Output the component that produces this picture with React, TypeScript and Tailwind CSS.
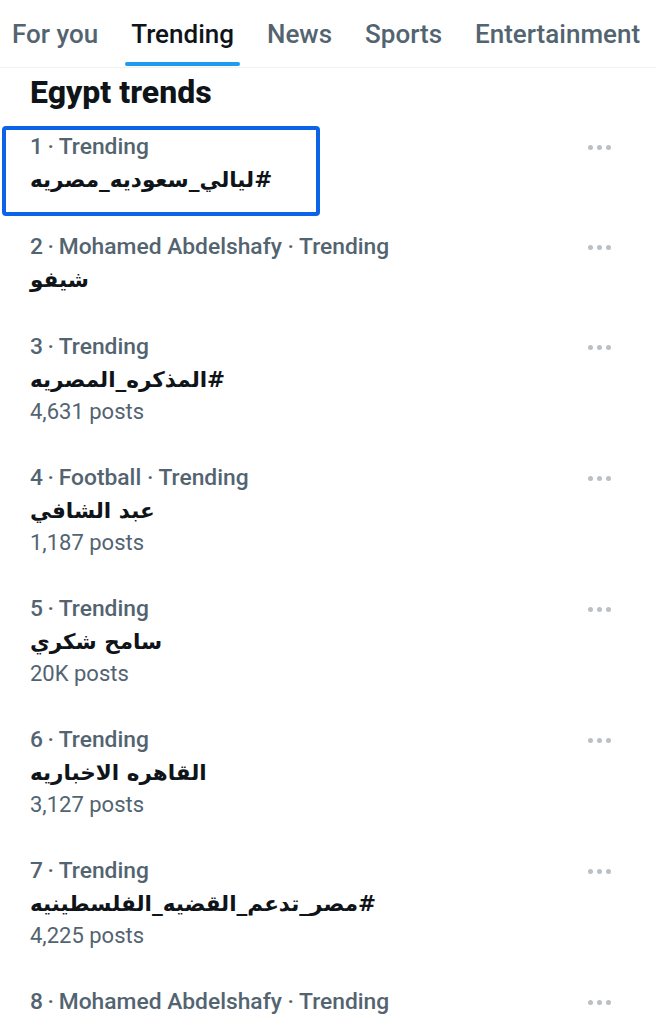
import { ReactNode } from 'react';

interface Trend {
    rank: number;
    context?: string;
    title?: string;
    posts?: string;
}

const trends: Trend[] = [
    { rank: 1, title: '#ليالي_سعوديه_مصريه' },
    { rank: 2, context: 'Mohamed Abdelshafy', title: 'شيفو' },
    { rank: 3, title: '#المذكره_المصريه', posts: '4,631 posts' },
    { rank: 4, context: 'Football', title: 'عبد الشافي', posts: '1,187 posts' },
    { rank: 5, title: 'سامح شكري', posts: '20K posts' },
    { rank: 6, title: 'القاهره الاخباريه', posts: '3,127 posts' },
    { rank: 7, title: '#مصر_تدعم_القضيه_الفلسطينيه', posts: '4,225 posts' },
    { rank: 8, context: 'Mohamed Abdelshafy' },
];

const tabs = ['For you', 'Trending', 'News', 'Sports', 'Entertainment'];

function Dots() {
    return (
        <div className="flex gap-[4px] pt-[14px]">
            <span className="w-[5px] h-[5px] rounded-full bg-[#b9c0c6]" />
            <span className="w-[5px] h-[5px] rounded-full bg-[#b9c0c6]" />
            <span className="w-[5px] h-[5px] rounded-full bg-[#b9c0c6]" />
        </div>
    );
}

function TrendRow({ trend, highlight }: { trend: Trend; highlight?: ReactNode }) {
    return (
        <div className="relative flex items-start justify-between pl-[30px] pr-[45px] pt-[17px] pb-[18px]">
            {highlight}
            <div className="flex flex-col">
                <div className="text-[22.8px] leading-[32px] font-medium text-[#536471]">
                    {trend.rank}
                    {'\u2009·\u2009'}
                    {trend.context ? `${trend.context} · ` : ''}Trending
                </div>
                {trend.title && (
                    <div
                        dir="rtl"
                        className="self-start text-[21.5px] leading-[33px] font-bold text-[#0f1419] font-['DejaVu_Sans',sans-serif]"
                    >
                        {trend.title}
                    </div>
                )}
                {trend.posts && (
                    <div className="text-[22px] leading-[31px] text-[#536471]">{trend.posts}</div>
                )}
            </div>
            <Dots />
        </div>
    );
}

export default function App() {
    return (
        <div className="w-[656px] h-[1020px] overflow-hidden bg-white font-['Roboto',sans-serif]">
            <div className="flex items-end h-[68px] border-b border-[#eff3f4] pl-[12px] gap-[33px]">
                {tabs.map((t) => (
                    <div key={t} className="relative h-full flex flex-col items-center">
                        <span
                            className={`mt-[16px] text-[26px] leading-[36px] font-medium ${
                                t === 'Trending' ? 'text-[#0f1419]' : 'text-[#536471]'
                            }`}
                        >
                            {t}
                        </span>
                        {t === 'Trending' && (
                            <span className="absolute bottom-[1px] -left-[6px] -right-[6px] h-[4px] rounded-full bg-[#1d9bf0]" />
                        )}
                    </div>
                ))}
            </div>
            <h2 className="pl-[30px] pt-[5px] pb-[3px] text-[32px] leading-[38px] font-extrabold text-[#0f1419]">
                Egypt trends
            </h2>
            <div className="flex flex-col">
                {trends.map((t, i) => (
                    <TrendRow
                        key={t.rank}
                        trend={t}
                        highlight={
                            i === 0 ? (
                                <div className="absolute left-[2px] top-[12px] w-[318px] h-[90px] border-[4px] border-[#0b63e5] rounded-[4px]" />
                            ) : undefined
                        }
                    />
                ))}
            </div>
        </div>
    );
}
